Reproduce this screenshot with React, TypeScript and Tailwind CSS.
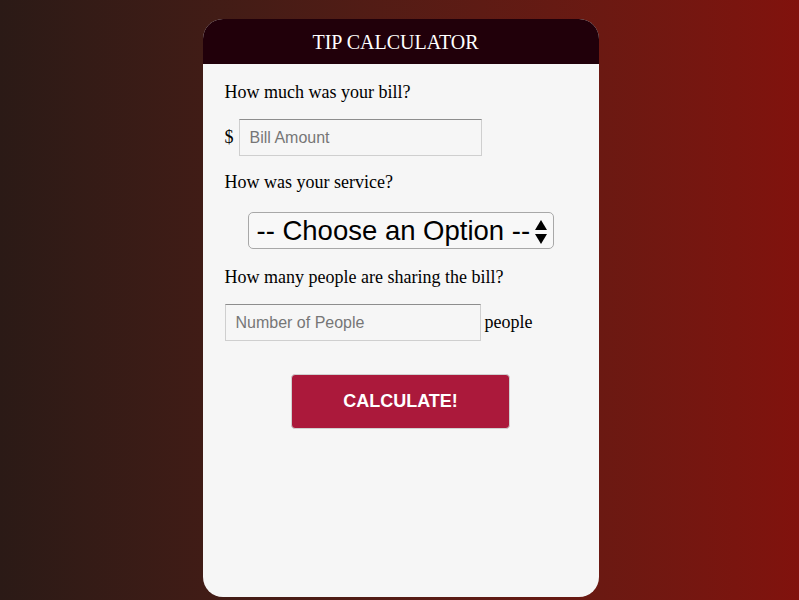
export default function App() {
  return (
    <div className="h-[600px] w-full overflow-hidden bg-gradient-to-r from-[#2b1a16] to-[#81120d] pl-[2px] pt-[19px]">
      <div className="mx-auto flex h-[578px] w-[396px] flex-col overflow-hidden rounded-[20px] bg-[#f6f6f6] font-['Liberation_Serif',serif] text-black">
        <div className="flex h-[45px] items-center justify-center bg-[#21000a] pr-[10px] pt-[1px] text-[20px] text-white">
          TIP CALCULATOR
        </div>
        <div className="flex flex-col px-[22px] pt-[17px]">
          <p className="text-[18px] leading-[22px]">How much was your bill?</p>
          <div className="mt-[16px] flex items-center text-[18px]">
            <span className="mr-[5px]">$</span>
            <input
              placeholder="Bill Amount"
              className="h-[37px] w-[243px] border border-[#cfcfcf] border-t-[#8d8d8d] bg-[#f6f6f6] px-[10px] font-['Liberation_Sans',sans-serif] text-[16px] placeholder:text-[#767676] outline-none"
            />
          </div>
          <p className="mt-[15px] text-[18px] leading-[22px]">How was your service?</p>
          <div className="mt-[19px] flex justify-center">
            <div className="relative flex h-[37px] w-[306px] items-center rounded-[5px] border border-[#a8a8a8] bg-[#f8f8f8] pl-[8px] font-['Liberation_Sans',sans-serif] text-[27.5px] leading-none">
              -- Choose an Option --
              <svg className="absolute right-[5px] top-[6px]" width="14" height="26" viewBox="0 0 14 26">
                <path d="M7 1 L13 11 L1 11 Z" fill="#000" />
                <path d="M7 25 L13 15 L1 15 Z" fill="#000" />
              </svg>
            </div>
          </div>
          <p className="mt-[17px] text-[18px] leading-[22px]">How many people are sharing the bill?</p>
          <div className="mt-[16px] flex items-center text-[18px]">
            <input
              placeholder="Number of People"
              className="h-[37px] w-[256px] border border-[#cfcfcf] border-t-[#8d8d8d] bg-[#f6f6f6] px-[10px] font-['Liberation_Sans',sans-serif] text-[16px] placeholder:text-[#767676] outline-none"
            />
            <span className="ml-[4px]">people</span>
          </div>
          <div className="mt-[33px] flex justify-center">
            <button className="h-[55px] w-[219px] rounded-[4px] border border-[#d0d0d0] bg-[#ab193b] font-['Liberation_Sans',sans-serif] text-[18px] font-bold text-white">
              CALCULATE!
            </button>
          </div>
        </div>
      </div>
    </div>
  );
}
